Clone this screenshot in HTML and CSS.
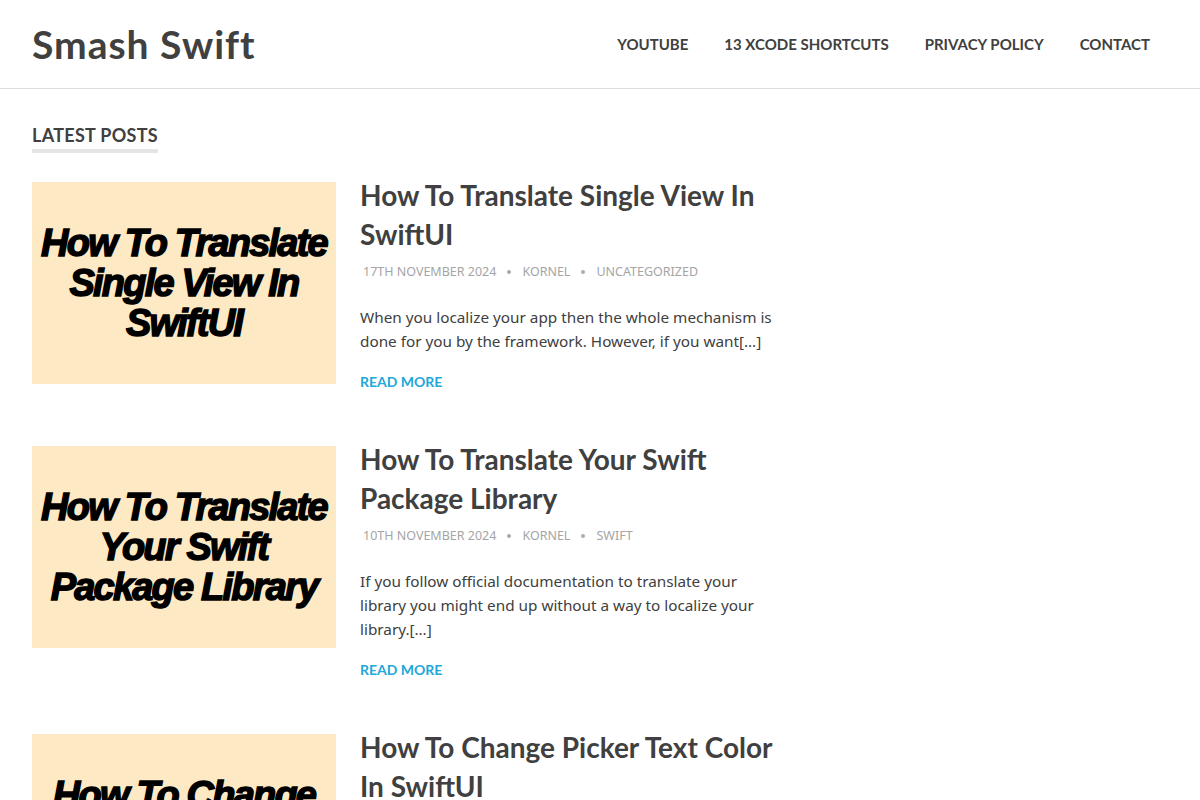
FILE: index.html
```html
<!DOCTYPE html>
<html lang="en">
<head>
    <meta charset="UTF-8">
    <meta name="viewport" content="width=device-width, initial-scale=1.0">
    <title>Smash Swift</title>
    <link rel="stylesheet" href="styles.css">
</head>
<body>
    <header class="site-header">
        <a class="site-title" href="#">Smash Swift</a>
        <nav class="main-nav">
            <a href="#">YouTube</a>
            <a href="#">13 Xcode Shortcuts</a>
            <a href="#">Privacy Policy</a>
            <a href="#">Contact</a>
        </nav>
    </header>

    <main class="content">
        <h2 class="archive-title">Latest Posts</h2>

        <article class="post">
            <div class="post-thumb">
                <span>How To Translate<br>Single View In<br>SwiftUI</span>
            </div>
            <div class="post-body">
                <h3 class="post-title"><a href="#">How To Translate Single View In SwiftUI</a></h3>
                <div class="post-meta">
                    <span>17th November 2024</span>
                    <span>Kornel</span>
                    <span>Uncategorized</span>
                </div>
                <p class="excerpt">When you localize your app then the whole mechanism is done for you by the framework. However, if you want[&hellip;]</p>
                <a class="read-more" href="#">Read More</a>
            </div>
        </article>

        <article class="post">
            <div class="post-thumb">
                <span>How To Translate<br>Your Swift<br>Package Library</span>
            </div>
            <div class="post-body">
                <h3 class="post-title"><a href="#">How To Translate Your Swift Package Library</a></h3>
                <div class="post-meta">
                    <span>10th November 2024</span>
                    <span>Kornel</span>
                    <span>Swift</span>
                </div>
                <p class="excerpt">If you follow official documentation to translate your library you might end up without a way to localize your library.[&hellip;]</p>
                <a class="read-more" href="#">Read More</a>
            </div>
        </article>

        <article class="post">
            <div class="post-thumb">
                <span>How To Change<br>Picker Text<br>Color In SwiftUI</span>
            </div>
            <div class="post-body">
                <h3 class="post-title"><a href="#">How To Change Picker Text Color In SwiftUI</a></h3>
                <div class="post-meta">
                    <span>3rd November 2024</span>
                    <span>Kornel</span>
                    <span>SwiftUI</span>
                </div>
                <p class="excerpt">Changing the text color of a picker is not as obvious as it looks.[&hellip;]</p>
                <a class="read-more" href="#">Read More</a>
            </div>
        </article>
    </main>
</body>
</html>
```

FILE: styles.css
```css
body {
	margin: 0;
	font-family: "Noto Sans", Arial, sans-serif;
	font-size: 16px;
	color: #404040;
	background: #fff;
}

a {
	text-decoration: none;
	color: inherit;
}

.site-header {
	display: flex;
	justify-content: space-between;
	align-items: center;
	height: 88px;
	padding: 0 32px;
	border-bottom: 1px solid #ddd;
}

.site-title {
	font-family: Lato, sans-serif;
	font-size: 39px;
	font-weight: 700;
	color: #404040;
	letter-spacing: 1px;
}

.main-nav {
	display: flex;
	gap: 36px;
	padding-right: 18px;
}

.main-nav a {
	font-family: Lato, sans-serif;
	font-size: 15px;
	font-weight: 700;
	text-transform: uppercase;
	color: #404040;
}

.content {
	width: 750px;
	padding: 35px 32px 0;
}

.archive-title {
	display: inline-block;
	margin: 0 0 29px;
	padding-bottom: 3px;
	font-family: Lato, sans-serif;
	font-size: 18px;
	font-weight: 700;
	letter-spacing: 0.3px;
	text-transform: uppercase;
	color: #404040;
	border-bottom: 4px solid #e5e5e5;
}

.post {
	display: flex;
	gap: 24px;
	margin-bottom: 52px;
}

.post-thumb {
	flex: 0 0 304px;
	height: 202px;
	display: flex;
	align-items: center;
	justify-content: center;
	background: #fee9c5;
}

.post-thumb span {
	font-family: "Liberation Sans", Arial, sans-serif;
	font-size: 38px;
	font-weight: 700;
	font-style: italic;
	line-height: 40px;
	letter-spacing: -1.8px;
	text-align: center;
	color: #000;
	-webkit-text-stroke: 1.5px #000;
}

.post-body {
	flex: 1;
}

.post-title {
	margin: -6px 0 8px;
	font-family: Lato, sans-serif;
	font-size: 28px;
	font-weight: 700;
	line-height: 39px;
	color: #404040;
}

.post-meta {
	display: flex;
	align-items: center;
	padding-left: 3px;
	font-size: 12.5px;
	line-height: 20px;
	text-transform: uppercase;
	color: #a5a5a5;
}

.post-meta span + span::before {
	content: "";
	display: inline-block;
	width: 4px;
	height: 4px;
	margin: 0 11px 2px 11px;
	border-radius: 50%;
	background: #aaa;
	vertical-align: middle;
}

.excerpt {
	margin: 23px 0 17px;
	font-size: 15.3px;
	line-height: 24px;
}

.read-more {
	display: block;
	font-family: Lato, sans-serif;
	font-size: 14px;
	font-weight: 700;
	line-height: 24px;
	text-transform: uppercase;
	color: #22a8d8;
}
```
